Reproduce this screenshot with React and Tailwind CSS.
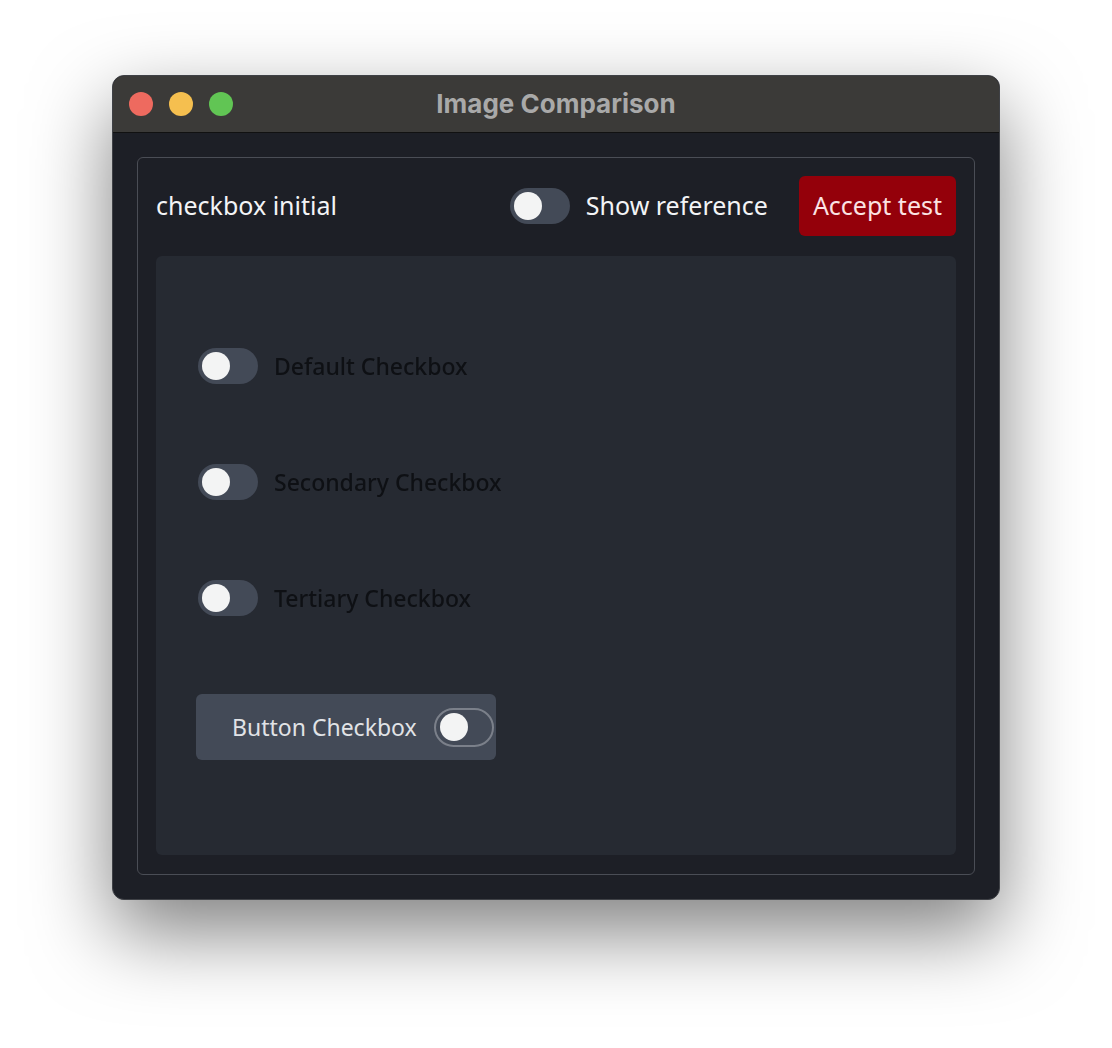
import React from "react";

const Toggle = ({ outlined = false }) => (
  <div
    className={
      outlined
        ? "flex items-center w-[60px] h-[39px] rounded-full border-2 border-[#7b808a] px-[4px]"
        : "flex items-center w-[60px] h-[36px] rounded-full bg-[#434a57] px-[4px]"
    }
  >
    <div className="w-[28px] h-[28px] rounded-full bg-[#f3f4f4]" />
  </div>
);

const Row = ({ label }) => (
  <div className="flex items-center gap-4 ml-0.5 h-[36px]">
    <Toggle />
    <span className="text-[23px] font-medium text-[#0e1014] blur-[0.4px]">{label}</span>
  </div>
);

const App = () => {
  return (
    <div
      className="w-[1112px] h-[1048px] bg-white pt-[75px] pl-[112px]"
      style={{ fontFamily: "'Noto Sans', Lato, sans-serif" }}
    >
      <div className="w-[888px] h-[825px] rounded-[12px] border border-[#3f4146] overflow-hidden bg-[#1d1f26] shadow-[0_32px_80px_rgba(0,0,0,0.5)] flex flex-col">
        {/* title bar */}
        <div className="relative h-[57px] bg-[#3b3a38] border-b border-[#111] flex items-center px-4 gap-4">
          <div className="w-[24px] h-[24px] rounded-full bg-[#ee6a5f]" />
          <div className="w-[24px] h-[24px] rounded-full bg-[#f5bf4f]" />
          <div className="w-[24px] h-[24px] rounded-full bg-[#61c554]" />
          <div
            className="absolute inset-0 flex items-center justify-center pb-[2px] text-[26px] font-bold text-[#a9a9a9]"
            style={{ fontFamily: "Inter, 'Liberation Sans', sans-serif" }}
          >
            Image Comparison
          </div>
        </div>

        {/* body */}
        <div className="flex-1 p-6">
          <div className="h-full rounded-[6px] border border-[#4a4d55] px-[18px] pt-[18px] pb-[19px] flex flex-col gap-5">
            <div className="flex items-center h-[60px]">
              <span className="text-[25px] text-[#f3f4f6]">checkbox initial</span>
              <div className="ml-auto flex items-center gap-4">
                <Toggle />
                <span className="text-[25px] text-[#f3f4f6]">Show reference</span>
              </div>
              <button className="ml-[31px] h-[60px] px-[14px] rounded-[6px] bg-[#94000a] text-[25px] text-[#fbe3e3]">
                Accept test
              </button>
            </div>

            <div className="flex-1 rounded-[6px] bg-[#262a32] pl-10 pt-[92px] flex flex-col items-start">
              <Row label="Default Checkbox" />
              <div className="mt-[80px]">
                <Row label="Secondary Checkbox" />
              </div>
              <div className="mt-[80px]">
                <Row label="Tertiary Checkbox" />
              </div>
              <div className="mt-[78px] w-[300px] h-[66px] rounded-[6px] bg-[#434a57] flex items-center pl-9 pr-[2px]">
                <span className="text-[23px] text-[#e1e3e6]">Button Checkbox</span>
                <div className="ml-auto">
                  <Toggle outlined />
                </div>
              </div>
            </div>
          </div>
        </div>
      </div>
    </div>
  );
};

export default App;
